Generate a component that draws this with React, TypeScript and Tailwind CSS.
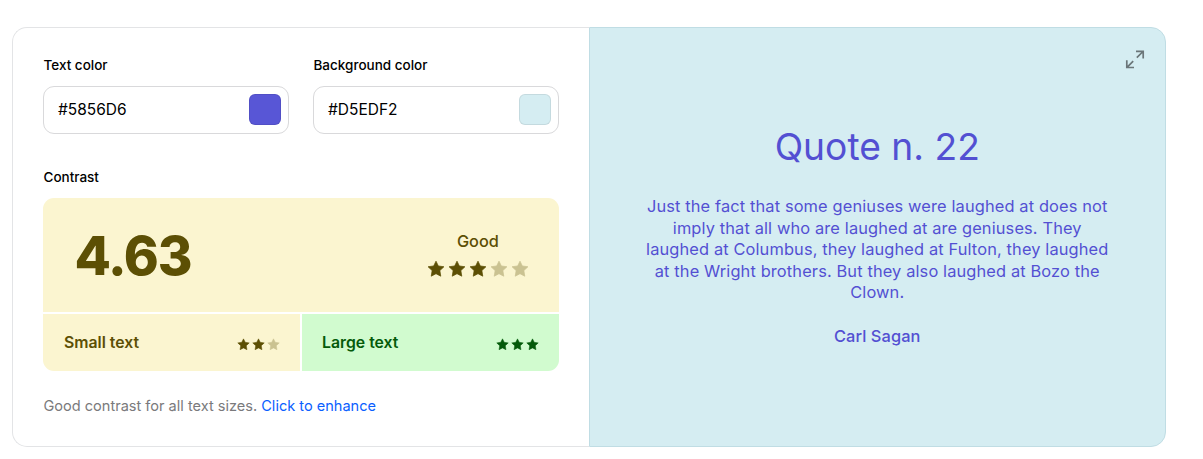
import React from "react";

type StarsProps = { filled: number; total: number; size: "sm" | "lg" };

function Stars({ filled, total, size }: StarsProps) {
  return (
    <div className={size === "lg" ? "flex gap-[2.8px]" : "flex gap-[2.2px]"}>
      {Array.from({ length: total }, (_, i) => (
        <svg
          key={i}
          viewBox="0 0 20 20"
          fill="currentColor"
          stroke="currentColor"
          strokeWidth="0.8"
          strokeLinejoin="round"
          className={`${size === "lg" ? "size-[18px]" : "size-[13px]"} ${i < filled ? "" : "opacity-30"}`}
        >
          <path d="M10 1.3l2.6 5.3 6.2.9-4.5 4.3 1 6.2-5.3-2.8L4.7 18l1-6.2L1.2 7.5l6.2-.9z" />
        </svg>
      ))}
    </div>
  );
}

function ColorField({ label, value, swatch }: { label: string; value: string; swatch: string }) {
  return (
    <div className="flex w-[246px] flex-col">
      <div className="h-5 pl-[0.5px] text-[13.5px] leading-5 font-[550] text-black">{label}</div>
      <div className="mt-[11px] flex h-12 items-center justify-between rounded-[11px] border border-[#d9d9db] bg-white pr-[7px] pb-px pl-[14px]">
        <span className="text-[15.5px] text-black">{value}</span>
        <div className={`h-[31px] w-8 rounded-[6px] border border-black/8 bg-clip-border ${swatch}`} />
      </div>
    </div>
  );
}

export default function App() {
  return (
    <div className="h-[459px] w-[1203px] bg-white pt-[27px] pl-[12px] font-['Inter',sans-serif]">
      <div className="flex h-[420px] w-[1154px]">
        <section className="w-[576.5px] rounded-l-[15px] border border-r-0 border-[#e3e4e6] pt-[27px] pl-[30px]">
          <div className="flex gap-6">
            <ColorField label="Text color" value="#5856D6" swatch="bg-[#5856d6]" />
            <ColorField label="Background color" value="#D5EDF2" swatch="bg-[#d5edf2]" />
          </div>
          <div className="mt-[33px] h-5 pl-[0.5px] text-[13.5px] leading-5 font-[550] text-black">Contrast</div>
          <div className="mt-[11px] grid w-[516px] grid-cols-2 gap-[2px] overflow-hidden rounded-[11px] text-[#5c4f04]">
            <div className="col-span-2 flex h-[114px] items-center justify-between bg-[#fbf5d0] pr-[30px] pl-[31.5px]">
              <div className="pt-[3px] text-[53px] leading-none font-extrabold tracking-[-0.023em]">4.63</div>
              <div className="flex flex-col items-center gap-[9px] pr-[0.5px] pb-px">
                <div className="text-[16.3px] leading-5 font-[550]">Good</div>
                <Stars filled={3} total={5} size="lg" />
              </div>
            </div>
            <div className="flex h-[57px] items-center justify-between bg-[#fbf5d0] pr-5 pl-[21px]">
              <span className="pt-px text-[15.8px] font-[560]">Small text</span>
              <div className="pt-[3px]">
                <Stars filled={2} total={3} size="sm" />
              </div>
            </div>
            <div className="flex h-[57px] items-center justify-between bg-[#d1fbcf] pr-5 pl-5 text-[#045a0a]">
              <span className="pt-px text-[15.8px] font-[560]">Large text</span>
              <div className="pt-[3px]">
                <Stars filled={3} total={3} size="sm" />
              </div>
            </div>
          </div>
          <p className="mt-[25px] pl-[0.5px] text-[14.55px] leading-5 text-[#7a7a7c]">
            Good contrast for all text sizes. <a className="text-[#0a60ff]">Click to enhance</a>
          </p>
        </section>
        <section className="relative flex w-[577.5px] flex-col items-center rounded-r-[15px] border border-[#c0dde4] bg-[#d5edf2] pt-[96px] text-center text-[#5350d2]">
          <svg viewBox="0 0 20 20" className="absolute top-[21px] right-[20px] size-5 text-[#6b7679]" fill="none" stroke="currentColor" strokeWidth="1.7">
            <path d="M11 2.3H18.2V9.5M18 2.500L11.800 8.700M1.800 11.300V18.500H9M2 18.300L8.200 12.100" />
          </svg>
          <h1 className="text-[37.2px] leading-[46px] font-normal">Quote n. 22</h1>
          <p className="mt-[26px] text-[16.4px] leading-[21.5px] tracking-[0.13px]">
            Just the fact that some geniuses were laughed at does not<br />
            imply that all who are laughed at are geniuses. They<br />
            laughed at Columbus, they laughed at Fulton, they laughed<br />
            at the Wright brothers. But they also laughed at Bozo the<br />
            Clown.
          </p>
          <p className="mt-[22px] text-[16.4px] leading-[21.5px] font-[550] tracking-[0.08px]">Carl Sagan</p>
        </section>
      </div>
    </div>
  );
}
